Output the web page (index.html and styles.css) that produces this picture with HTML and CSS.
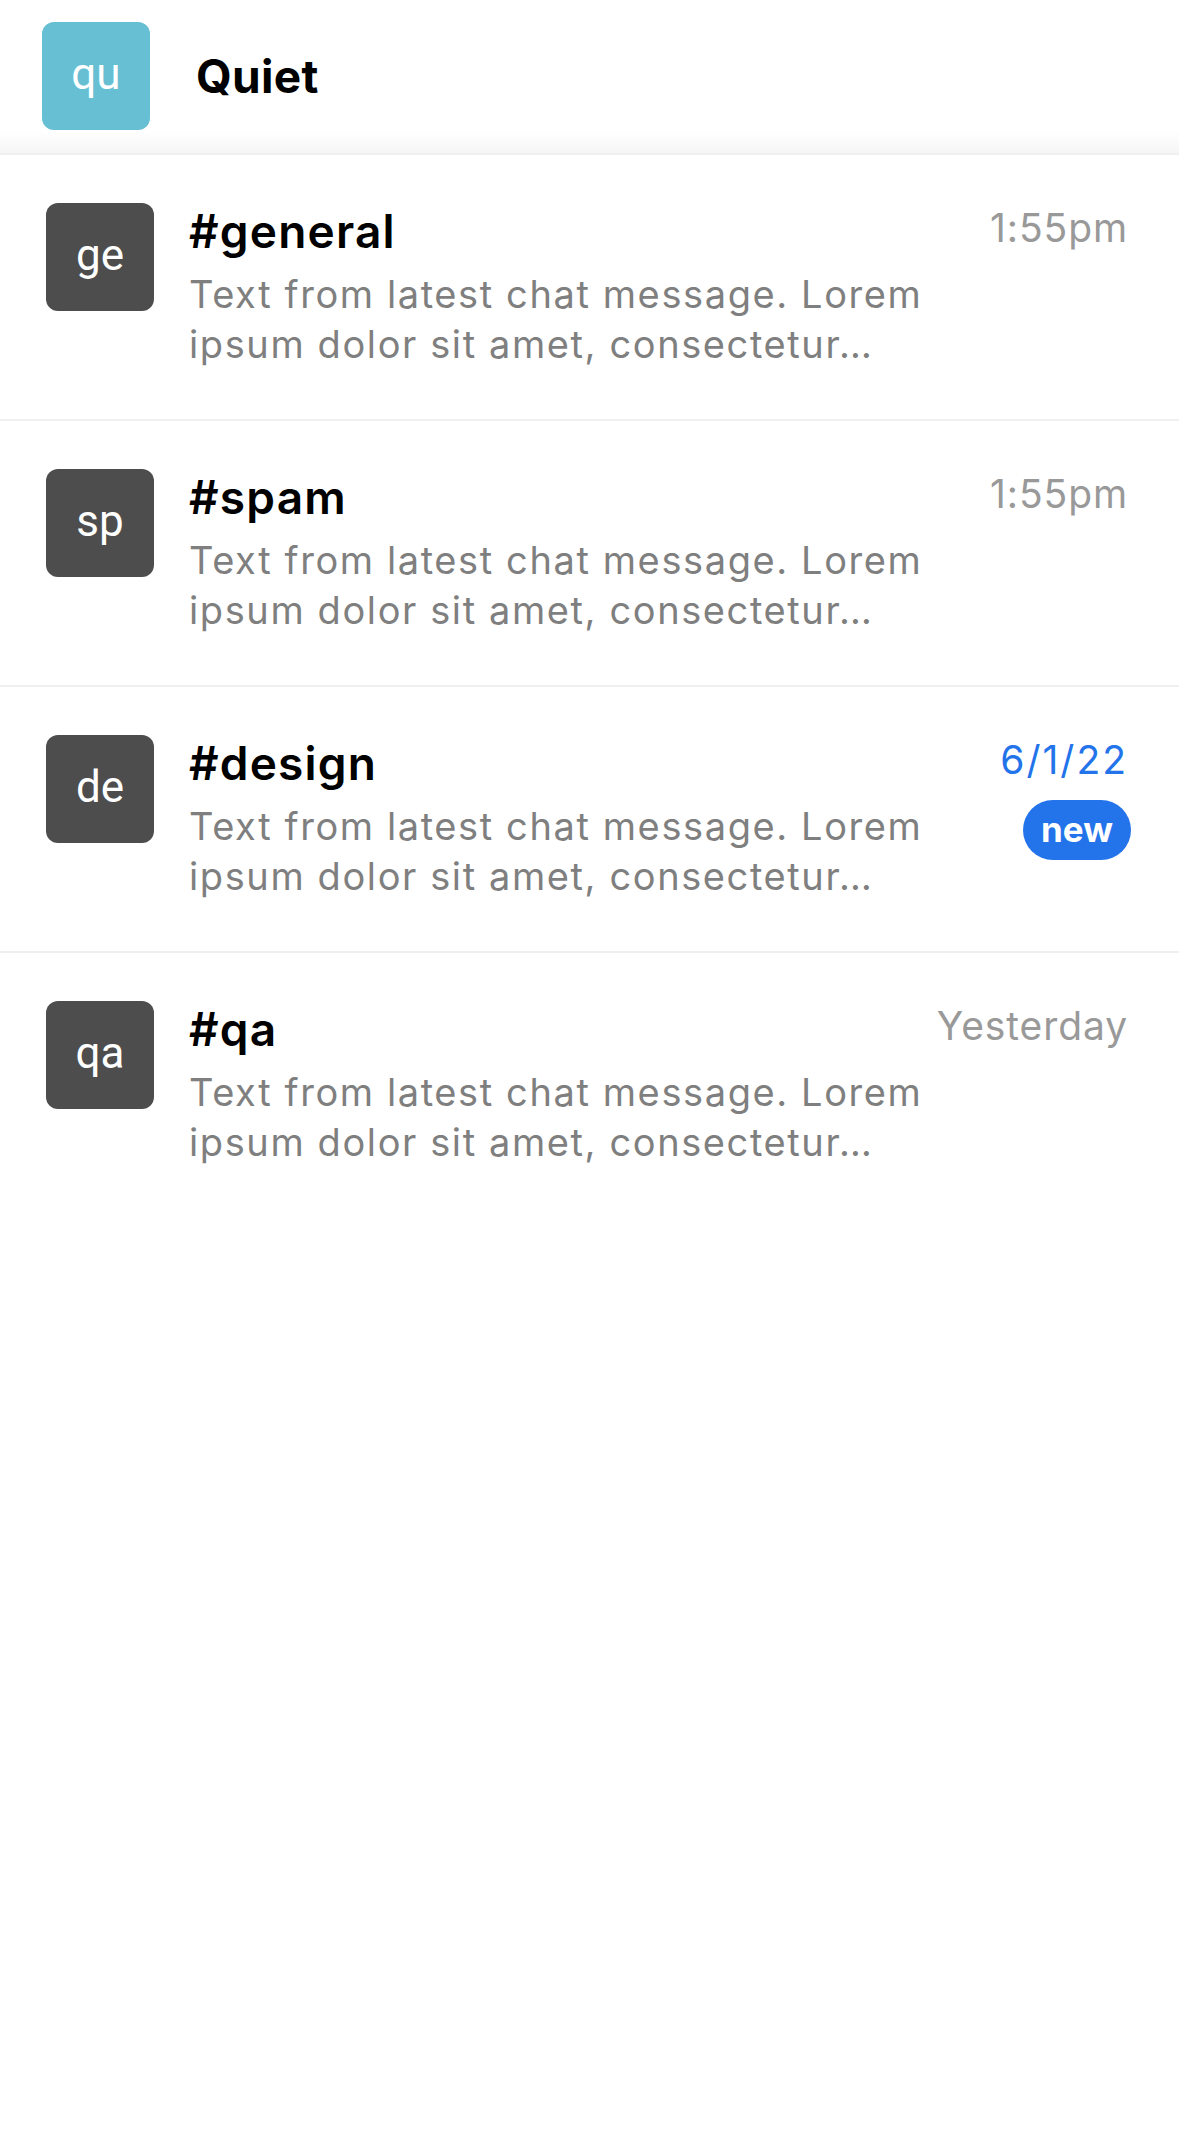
FILE: index.html
```html
<!DOCTYPE html>
<html lang="en">
<head>
<meta charset="utf-8">
<title>Quiet</title>
<link rel="stylesheet" href="styles.css">
</head>
<body>
<header class="topbar">
  <div class="avatar avatar-community">qu</div>
  <h1 class="community-name">Quiet</h1>
</header>
<main class="channel-list">
  <div class="channel-row">
    <div class="avatar">ge</div>
    <div class="channel-main">
      <div class="channel-name">#general</div>
      <div class="channel-msg">Text from latest chat message. Lorem ipsum dolor sit amet, consectetur…</div>
    </div>
    <div class="channel-meta">
      <div class="channel-time">1:55pm</div>
    </div>
  </div>
  <div class="channel-row">
    <div class="avatar">sp</div>
    <div class="channel-main">
      <div class="channel-name">#spam</div>
      <div class="channel-msg">Text from latest chat message. Lorem ipsum dolor sit amet, consectetur…</div>
    </div>
    <div class="channel-meta">
      <div class="channel-time">1:55pm</div>
    </div>
  </div>
  <div class="channel-row">
    <div class="avatar">de</div>
    <div class="channel-main">
      <div class="channel-name">#design</div>
      <div class="channel-msg">Text from latest chat message. Lorem ipsum dolor sit amet, consectetur…</div>
    </div>
    <div class="channel-meta">
      <div class="channel-time channel-time-new">6/1/22</div>
      <div class="badge-new">new</div>
    </div>
  </div>
  <div class="channel-row">
    <div class="avatar">qa</div>
    <div class="channel-main">
      <div class="channel-name">#qa</div>
      <div class="channel-msg">Text from latest chat message. Lorem ipsum dolor sit amet, consectetur…</div>
    </div>
    <div class="channel-meta">
      <div class="channel-time">Yesterday</div>
    </div>
  </div>
</main>
</body>
</html>
```

FILE: styles.css
```css
* {
  box-sizing: border-box;
}

body {
  margin: 0;
  background: #ffffff;
  font-family: Inter, "Liberation Sans", sans-serif;
  color: #000000;
}

.topbar {
  display: flex;
  align-items: center;
  gap: 46px;
  height: 155px;
  padding: 0 0 2px 42px;
  background: linear-gradient(to bottom, #ffffff 86%, #f5f5f5 100%);
  border-bottom: 2px solid #efefef;
}

.avatar {
  flex: 0 0 auto;
  display: flex;
  align-items: center;
  justify-content: center;
  width: 108px;
  height: 108px;
  border-radius: 12px;
  background: #4d4d4d;
  color: #ffffff;
  font-family: Roboto, "Liberation Sans", sans-serif;
  font-size: 44px;
  line-height: 1;
  padding-bottom: 4px;
}

.avatar-community {
  background: #67bfd4;
}

.community-name {
  margin: 0;
  font-size: 46px;
  font-weight: 700;
  letter-spacing: 0.3px;
}

.channel-row {
  display: flex;
  align-items: flex-start;
  height: 266px;
  padding: 48px 48px 0 46px;
  border-bottom: 2px solid #efefef;
}

.channel-row:last-child {
  border-bottom: none;
}

.channel-main {
  flex: 1 1 auto;
  min-width: 0;
  padding-left: 35px;
}

.channel-name {
  font-size: 46px;
  font-weight: 600;
  letter-spacing: 1.2px;
  line-height: 56px;
  height: 56px;
}

.channel-msg {
  margin-top: 10px;
  width: 790px;
  font-size: 38px;
  letter-spacing: 1.6px;
  line-height: 50px;
  color: #7f7f7f;
}

.channel-meta {
  flex: 0 0 auto;
  display: flex;
  flex-direction: column;
  align-items: flex-end;
}

.channel-time {
  font-size: 39px;
  letter-spacing: 0.9px;
  line-height: 50px;
  color: #999999;
  margin-right: 3px;
}

.channel-time-new {
  color: #2373ea;
  letter-spacing: 2px;
}

.badge-new {
  margin-top: 15px;
  width: 108px;
  height: 60px;
  border-radius: 30px;
  background: #2373ea;
  color: #ffffff;
  font-size: 35px;
  font-weight: 700;
  line-height: 58px;
  text-align: center;
}
```
